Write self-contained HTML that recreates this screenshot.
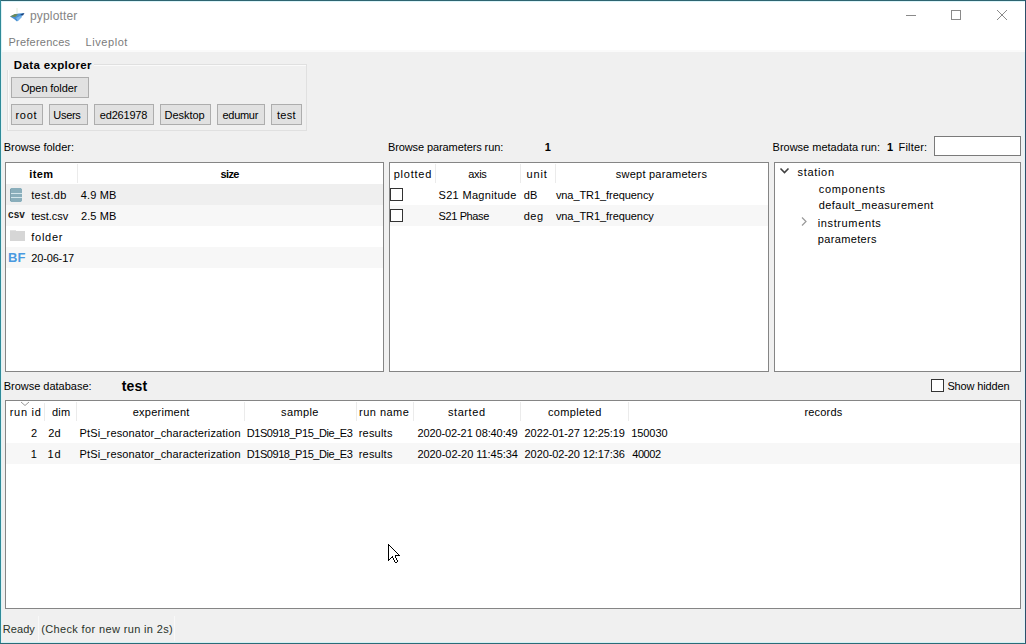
<!DOCTYPE html>
<html><head><meta charset="utf-8">
<style>
*{box-sizing:border-box;margin:0;padding:0}
html,body{width:1026px;height:644px;overflow:hidden;background:#f0f0f0}
body{position:relative;font-family:"Liberation Sans",sans-serif;font-size:11px;color:#000;line-height:20px}
.a{position:absolute}
.t{position:absolute;white-space:pre;line-height:20px}
.frame{position:absolute;border:1px solid #858585;background:#fff}
.btn{position:absolute;border:1px solid #adadad;background:#e1e1e1}
.hsep{position:absolute;width:1px;background:#ebebeb}
.row{position:absolute;height:21px}
.cb{position:absolute;width:13px;height:13px;border:1px solid #333;background:#fff}
</style></head><body>

<!-- window borders -->
<div class="a" style="left:0;top:0;width:1026px;height:1px;background:#2e6470"></div>
<div class="a" style="left:0;top:0;width:1px;height:644px;background:#2f8a98"></div>
<div class="a" style="left:1025px;top:0;width:1px;height:644px;background:#2d4f6a"></div>
<div class="a" style="left:0;top:643px;width:1026px;height:1px;background:#2b6c78"></div>
<div class="a" style="left:1px;top:642px;width:1024px;height:1px;background:#d4f0f4"></div>
<div class="a" style="left:1021px;top:52px;width:3px;height:590px;background:#edf0f2"></div>
<div class="a" style="left:1024px;top:1px;width:1px;height:642px;background:#e2f2f6"></div>
<div class="a" style="left:1px;top:1px;width:1px;height:640px;background:#dff3f6"></div>

<!-- title bar -->
<div class="a" style="left:2px;top:1px;width:1023px;height:51px;background:#fff"></div>
<div class="a" style="left:2px;top:50px;width:1023px;height:2px;background:#fafafa"></div>
<div class="a" style="left:1px;top:1px;width:1024px;height:1px;background:#dcf5fa"></div>
<svg class="a" style="left:8px;top:6px" width="20" height="18" viewBox="0 0 20 18">
  <path d="M9 2 L9 7" stroke="#e2ecd8" stroke-width="1"/>
  <path d="M2 10.5 L7 8 L11 7.5 L16 7 L14 10 L11 13.5 L9 15.5 L6 13 Z" fill="#4a90d0"/>
  <path d="M2 10.5 L7 8 L10 8.5 L7 11 Z" fill="#6f8a52"/>
  <path d="M8 12 L12 10 L14 11 L10 15 Z" fill="#78b6ee"/>
  <path d="M12 8.5 L16.5 7 L15 9.5 Z" fill="#1a3f7a"/>
</svg>
<div class="a" style="left:906px;top:15px;width:10px;height:1px;background:#8a8a8a"></div>
<div class="a" style="left:951px;top:10px;width:10px;height:10px;border:1px solid #8a8a8a"></div>
<svg class="a" style="left:996px;top:9px" width="12" height="12" viewBox="0 0 12 12">
  <path d="M1 1 L11 11 M11 1 L1 11" stroke="#8a8a8a" stroke-width="1"/>
</svg>

<!-- group box -->
<div class="a" style="left:7px;top:64px;width:300px;height:67px;border:1px solid #e0e0e0;box-shadow:inset 1px 1px 0 #fafafa"></div>
<div class="a" style="left:6px;top:58px;width:88px;height:12px;background:#f0f0f0"></div>
<div class="btn" style="left:11px;top:77px;width:78px;height:21px"></div>
<div class="btn" style="left:11px;top:104px;width:32px;height:21px"></div>
<div class="btn" style="left:49px;top:104px;width:39px;height:21px"></div>
<div class="btn" style="left:94px;top:104px;width:60px;height:21px"></div>
<div class="btn" style="left:160px;top:104px;width:51px;height:21px"></div>
<div class="btn" style="left:217px;top:104px;width:48px;height:21px"></div>
<div class="btn" style="left:271px;top:104px;width:31px;height:21px"></div>

<!-- filter -->
<div class="a" style="left:934px;top:136px;width:87px;height:20px;border:1px solid #7a7a7a;background:#fff"></div>

<!-- folder tree -->
<div class="frame" style="left:5px;top:162px;width:379px;height:210px"></div>
<div class="row" style="left:6px;top:184px;width:377px;background:#efefef"></div>
<div class="row" style="left:6px;top:205px;width:377px;background:#f7f7f7"></div>
<div class="row" style="left:6px;top:247px;width:377px;background:#f7f7f7"></div>
<div class="hsep" style="left:77px;top:164px;height:19px"></div>
<svg class="a" style="left:10px;top:188px" width="12" height="14" viewBox="0 0 12 14" shape-rendering="crispEdges">
  <rect x="0" y="0" width="12" height="14" fill="#8aaebb"/>
  <rect x="0" y="5" width="12" height="1" fill="#d4e6ec"/>
  <rect x="0" y="9" width="12" height="1" fill="#d4e6ec"/>
  <rect x="0" y="0" width="1" height="1" fill="#c8dce2"/>
  <rect x="11" y="0" width="1" height="1" fill="#c8dce2"/>
  <rect x="0" y="13" width="1" height="1" fill="#c8dce2"/>
  <rect x="11" y="13" width="1" height="1" fill="#c8dce2"/>
  <rect x="0" y="1" width="1" height="12" fill="#7d9fad"/>
</svg>
<div class="t" style="left:8px;top:205px;font-size:10px;font-weight:bold;color:#222;letter-spacing:0.1px">csv</div>
<div class="a" style="left:10px;top:231px;width:15px;height:10px;background:#d6d6d6"></div><div class="a" style="left:10px;top:230px;width:6px;height:1px;background:#e2e2e2"></div>
<div class="t" style="left:8px;top:248px;font-size:13px;font-weight:bold;color:#4a9ae0">BF</div>

<!-- params table -->
<div class="frame" style="left:389px;top:162px;width:380px;height:210px"></div>
<div class="row" style="left:390px;top:205px;width:378px;background:#f7f7f7"></div>
<div class="hsep" style="left:435px;top:164px;height:19px"></div>
<div class="hsep" style="left:520px;top:164px;height:19px"></div>
<div class="hsep" style="left:555px;top:164px;height:19px"></div>
<div class="cb" style="left:390px;top:188px"></div>
<div class="cb" style="left:390px;top:209px"></div>

<!-- metadata tree -->
<div class="frame" style="left:774px;top:162px;width:247px;height:210px"></div>
<svg class="a" style="left:779px;top:167px" width="11" height="8" viewBox="0 0 11 8">
  <path d="M1.5 1.5 L5.5 5.5 L9.5 1.5" stroke="#404040" stroke-width="1.6" fill="none"/>
</svg>
<svg class="a" style="left:800px;top:216px" width="8" height="11" viewBox="0 0 8 11">
  <path d="M2 1.5 L6 5.5 L2 9.5" stroke="#999" stroke-width="1.2" fill="none"/>
</svg>

<!-- show hidden -->
<div class="cb" style="left:931px;top:379px"></div>

<!-- database table -->
<div class="frame" style="left:5px;top:400px;width:1016px;height:209px"></div>
<div class="row" style="left:6px;top:443px;width:1014px;background:#f7f7f7"></div>
<svg class="a" style="left:20px;top:401px" width="10" height="6" viewBox="0 0 10 6">
  <path d="M1 1 L5 4.5 L9 1" stroke="#999" stroke-width="1" fill="none"/>
</svg>
<div class="hsep" style="left:44px;top:403px;height:18px"></div>
<div class="hsep" style="left:76px;top:402px;height:19px"></div>
<div class="hsep" style="left:244px;top:402px;height:19px"></div>
<div class="hsep" style="left:356px;top:402px;height:19px"></div>
<div class="hsep" style="left:413px;top:402px;height:19px"></div>
<div class="hsep" style="left:520px;top:402px;height:19px"></div>
<div class="hsep" style="left:628px;top:402px;height:19px"></div>

<div class="a" style="left:38px;top:616px;width:1px;height:25px;background:#f8f8f8"></div>
<div class="a" style="left:174px;top:616px;width:1px;height:25px;background:#f8f8f8"></div>
<div class="t" style="left:30.00px;top:6px;font-size:12px;color:#858585;letter-spacing:0.162px">pyplotter</div>
<div class="t" style="left:8.50px;top:32px;color:#7b7b7b;letter-spacing:0.230px">Preferences</div>
<div class="t" style="left:85.60px;top:32px;color:#7b7b7b;letter-spacing:0.557px">Liveplot</div>
<div class="t" style="left:13.80px;top:55px;font-size:11.5px;font-weight:bold;letter-spacing:0.350px">Data explorer</div>
<div class="t" style="left:20.90px;top:78px;letter-spacing:-0.100px">Open folder</div>
<div class="t" style="left:15.40px;top:105px;letter-spacing:0.767px">root</div>
<div class="t" style="left:53.30px;top:105px;letter-spacing:-0.300px">Users</div>
<div class="t" style="left:99.80px;top:105px;letter-spacing:-0.200px">ed261978</div>
<div class="t" style="left:164.60px;top:105px;letter-spacing:-0.050px">Desktop</div>
<div class="t" style="left:222.50px;top:105px;letter-spacing:-0.300px">edumur</div>
<div class="t" style="left:277.00px;top:105px;letter-spacing:0.300px">test</div>
<div class="t" style="left:3.70px;top:137px">Browse folder:</div>
<div class="t" style="left:387.90px;top:137px;letter-spacing:-0.095px">Browse parameters run:</div>
<div class="t" style="left:544.80px;top:137px;font-weight:bold">1</div>
<div class="t" style="left:772.60px;top:137px;letter-spacing:-0.011px">Browse metadata run:</div>
<div class="t" style="left:887.00px;top:137px;font-weight:bold">1</div>
<div class="t" style="left:898.60px;top:137px;letter-spacing:0.167px">Filter:</div>
<div class="t" style="left:29.30px;top:164px;font-weight:bold;letter-spacing:0.400px">item</div>
<div class="t" style="left:220.40px;top:164px;font-weight:bold;letter-spacing:-0.567px">size</div>
<div class="t" style="left:31.20px;top:185px;letter-spacing:0.367px">test.db</div>
<div class="t" style="left:80.70px;top:185px;letter-spacing:0.160px">4.9 MB</div>
<div class="t" style="left:31.20px;top:206px;letter-spacing:-0.029px">test.csv</div>
<div class="t" style="left:81.00px;top:206px;letter-spacing:0.080px">2.5 MB</div>
<div class="t" style="left:31.20px;top:227px;letter-spacing:0.760px">folder</div>
<div class="t" style="left:31.20px;top:248px;letter-spacing:-0.143px">20-06-17</div>
<div class="t" style="left:393.70px;top:164px;letter-spacing:0.767px">plotted</div>
<div class="t" style="left:468.20px;top:164px;letter-spacing:-0.300px">axis</div>
<div class="t" style="left:526.50px;top:164px;letter-spacing:0.833px">unit</div>
<div class="t" style="left:615.70px;top:164px;letter-spacing:0.253px">swept parameters</div>
<div class="t" style="left:438.50px;top:185px;letter-spacing:0.325px">S21 Magnitude</div>
<div class="t" style="left:523.70px;top:185px;letter-spacing:0.200px">dB</div>
<div class="t" style="left:555.90px;top:185px;letter-spacing:-0.069px">vna_TR1_frequency</div>
<div class="t" style="left:438.50px;top:206px;letter-spacing:-0.375px">S21 Phase</div>
<div class="t" style="left:523.70px;top:206px;letter-spacing:0.500px">deg</div>
<div class="t" style="left:555.90px;top:206px;letter-spacing:-0.069px">vna_TR1_frequency</div>
<div class="t" style="left:797.50px;top:162px;letter-spacing:0.683px">station</div>
<div class="t" style="left:818.70px;top:179px;letter-spacing:0.700px">components</div>
<div class="t" style="left:818.70px;top:195px;letter-spacing:0.461px">default_measurement</div>
<div class="t" style="left:817.70px;top:213px;letter-spacing:0.630px">instruments</div>
<div class="t" style="left:817.70px;top:229px;letter-spacing:0.367px">parameters</div>
<div class="t" style="left:3.70px;top:376px;letter-spacing:-0.013px">Browse database:</div>
<div class="t" style="left:121.70px;top:376px;font-size:14px;font-weight:bold;letter-spacing:0.233px">test</div>
<div class="t" style="left:947.40px;top:376px;letter-spacing:-0.140px">Show hidden</div>
<div class="t" style="left:9.70px;top:402px;letter-spacing:0.740px">run id</div>
<div class="t" style="left:52.00px;top:402px;letter-spacing:0.200px">dim</div>
<div class="t" style="left:132.70px;top:402px;letter-spacing:0.256px">experiment</div>
<div class="t" style="left:281.00px;top:402px;letter-spacing:0.400px">sample</div>
<div class="t" style="left:359.00px;top:402px;letter-spacing:0.486px">run name</div>
<div class="t" style="left:448.00px;top:402px;letter-spacing:0.567px">started</div>
<div class="t" style="left:548.00px;top:402px;letter-spacing:0.325px">completed</div>
<div class="t" style="left:804.50px;top:402px;letter-spacing:0.167px">records</div>
<div class="t" style="left:31.00px;top:423px">2</div>
<div class="t" style="left:48.30px;top:423px;letter-spacing:0.100px">2d</div>
<div class="t" style="left:79.60px;top:423px;letter-spacing:0.147px">PtSi_resonator_characterization</div>
<div class="t" style="left:246.80px;top:423px;letter-spacing:-0.459px">D1S0918_P15_Die_E3</div>
<div class="t" style="left:358.70px;top:423px;letter-spacing:0.217px">results</div>
<div class="t" style="left:417.40px;top:423px;letter-spacing:-0.100px">2020-02-21 08:40:49</div>
<div class="t" style="left:524.60px;top:423px;letter-spacing:-0.100px">2022-01-27 12:25:19</div>
<div class="t" style="left:631.20px;top:423px;letter-spacing:-0.060px">150030</div>
<div class="t" style="left:30.70px;top:444px">1</div>
<div class="t" style="left:47.60px;top:444px;letter-spacing:0.800px">1d</div>
<div class="t" style="left:79.60px;top:444px;letter-spacing:0.147px">PtSi_resonator_characterization</div>
<div class="t" style="left:246.80px;top:444px;letter-spacing:-0.459px">D1S0918_P15_Die_E3</div>
<div class="t" style="left:358.70px;top:444px;letter-spacing:0.217px">results</div>
<div class="t" style="left:417.40px;top:444px;letter-spacing:-0.044px">2020-02-20 11:45:34</div>
<div class="t" style="left:524.60px;top:444px;letter-spacing:-0.100px">2020-02-20 12:17:36</div>
<div class="t" style="left:632.20px;top:444px;letter-spacing:-0.425px">40002</div>
<div class="t" style="left:2.80px;top:619px;color:#2a332a;letter-spacing:0.050px">Ready</div>
<div class="t" style="left:41.20px;top:619px;color:#2a332a;letter-spacing:0.362px">(Check for new run in 2s)</div>

<!-- cursor -->
<svg class="a" style="left:388px;top:544px" width="12" height="19" viewBox="0 0 12 19" shape-rendering="crispEdges"><rect x="0" y="0" width="1" height="1" fill="#000"/><rect x="0" y="1" width="2" height="1" fill="#000"/><rect x="0" y="2" width="1" height="1" fill="#000"/><rect x="1" y="2" width="1" height="1" fill="#fff"/><rect x="2" y="2" width="1" height="1" fill="#000"/><rect x="0" y="3" width="1" height="1" fill="#000"/><rect x="1" y="3" width="2" height="1" fill="#fff"/><rect x="3" y="3" width="1" height="1" fill="#000"/><rect x="0" y="4" width="1" height="1" fill="#000"/><rect x="1" y="4" width="3" height="1" fill="#fff"/><rect x="4" y="4" width="1" height="1" fill="#000"/><rect x="0" y="5" width="1" height="1" fill="#000"/><rect x="1" y="5" width="4" height="1" fill="#fff"/><rect x="5" y="5" width="1" height="1" fill="#000"/><rect x="0" y="6" width="1" height="1" fill="#000"/><rect x="1" y="6" width="5" height="1" fill="#fff"/><rect x="6" y="6" width="1" height="1" fill="#000"/><rect x="0" y="7" width="1" height="1" fill="#000"/><rect x="1" y="7" width="6" height="1" fill="#fff"/><rect x="7" y="7" width="1" height="1" fill="#000"/><rect x="0" y="8" width="1" height="1" fill="#000"/><rect x="1" y="8" width="7" height="1" fill="#fff"/><rect x="8" y="8" width="1" height="1" fill="#000"/><rect x="0" y="9" width="1" height="1" fill="#000"/><rect x="1" y="9" width="8" height="1" fill="#fff"/><rect x="9" y="9" width="1" height="1" fill="#000"/><rect x="0" y="10" width="1" height="1" fill="#000"/><rect x="1" y="10" width="9" height="1" fill="#fff"/><rect x="10" y="10" width="1" height="1" fill="#000"/><rect x="0" y="11" width="1" height="1" fill="#000"/><rect x="1" y="11" width="6" height="1" fill="#fff"/><rect x="7" y="11" width="5" height="1" fill="#000"/><rect x="0" y="12" width="1" height="1" fill="#000"/><rect x="1" y="12" width="3" height="1" fill="#fff"/><rect x="4" y="12" width="1" height="1" fill="#000"/><rect x="5" y="12" width="2" height="1" fill="#fff"/><rect x="7" y="12" width="1" height="1" fill="#000"/><rect x="0" y="13" width="1" height="1" fill="#000"/><rect x="1" y="13" width="2" height="1" fill="#fff"/><rect x="3" y="13" width="2" height="1" fill="#000"/><rect x="5" y="13" width="2" height="1" fill="#fff"/><rect x="7" y="13" width="1" height="1" fill="#000"/><rect x="0" y="14" width="1" height="1" fill="#000"/><rect x="1" y="14" width="1" height="1" fill="#fff"/><rect x="2" y="14" width="1" height="1" fill="#000"/><rect x="5" y="14" width="1" height="1" fill="#000"/><rect x="6" y="14" width="2" height="1" fill="#fff"/><rect x="8" y="14" width="1" height="1" fill="#000"/><rect x="0" y="15" width="2" height="1" fill="#000"/><rect x="5" y="15" width="1" height="1" fill="#000"/><rect x="6" y="15" width="2" height="1" fill="#fff"/><rect x="8" y="15" width="1" height="1" fill="#000"/><rect x="0" y="16" width="1" height="1" fill="#000"/><rect x="6" y="16" width="1" height="1" fill="#000"/><rect x="7" y="16" width="2" height="1" fill="#fff"/><rect x="9" y="16" width="1" height="1" fill="#000"/><rect x="6" y="17" width="1" height="1" fill="#000"/><rect x="7" y="17" width="2" height="1" fill="#fff"/><rect x="9" y="17" width="1" height="1" fill="#000"/><rect x="7" y="18" width="2" height="1" fill="#000"/></svg>

</body></html>
